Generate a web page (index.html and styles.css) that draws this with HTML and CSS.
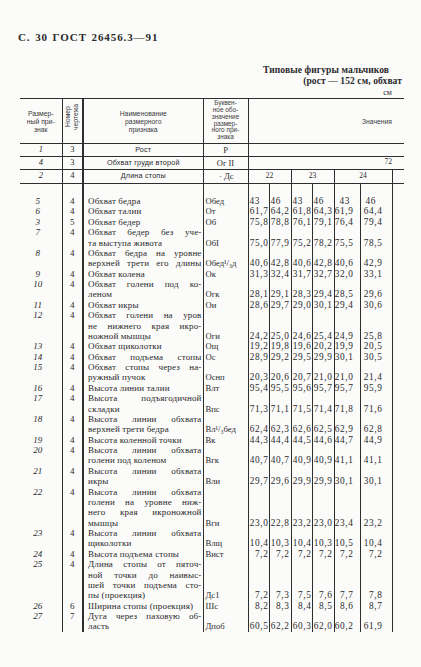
FILE: index.html
```html
<!DOCTYPE html>
<html lang="ru">
<head>
<meta charset="utf-8">
<title>ГОСТ 26456.3—91, с. 30</title>
<link rel="stylesheet" href="styles.css">
</head>
<body>
<div class="page">
  <div class="running">С. 30 ГОСТ 26456.3—91</div>
  <div class="caption">
    <div class="cap1">Типовые фигуры мальчиков</div>
    <div class="cap2">(рост — 152 см, обхват</div>
    <div class="cap3">см</div>
  </div>
  <table class="t">
    <colgroup>
      <col class="w42"><col class="w21"><col class="w120"><col class="w45">
      <col class="w21"><col class="w22"><col class="w21"><col class="w22"><col class="w26"><col class="w32"><col class="w12">
    </colgroup>
    <thead>
      <tr class="h0">
        <th class="hn">Размер-<br>ный при-<br>знак</th>
        <th class="hc"><span class="rot">Номер<br>чертежа</span></th>
        <th class="hm">Наименование<br>размерного<br>признака</th>
        <th class="hd">Буквен-<br>ное обо-<br>значение<br>размер-<br>ного при-<br>знака</th>
        <th class="hv" colspan="7">Значения</th>
      </tr>
      <tr class="h1">
        <td class="n">1</td><td class="c">3</td><td class="hm2">Рост</td><td class="hd2">Р</td><td class="hv2" colspan="7"></td>
      </tr>
      <tr class="h1">
        <td class="n">4</td><td class="c">3</td><td class="hm2">Обхват груди второй</td><td class="hd2">Ог II</td><td class="hv2 r72" colspan="7">72</td>
      </tr>
      <tr class="h2">
        <td class="n">2</td><td class="c">4</td><td class="hm2">Длина стопы</td><td class="hd2 dc">· Дс</td>
        <td class="g" colspan="2">22</td><td class="g" colspan="2">23</td><td class="g" colspan="2">24</td><td class="x"></td>
      </tr>
    </thead>
    <tbody class="b">
      <tr class="sp"><td></td><td class="c"></td><td class="nm"></td><td class="cd"></td><td class="v"></td><td class="v"></td><td class="v"></td><td class="v"></td><td class="v"></td><td class="v"></td><td class="x"></td></tr>
      <tr class="f"><td class="n">5</td><td class="c">4</td><td class="nm"><div class="ln">Обхват бедра</div></td><td class="cd">Обед</td><td class="v v1">43</td><td class="v v2">46</td><td class="v v3">43</td><td class="v v4">46</td><td class="v v5">43</td><td class="v v6">46</td><td class="x"></td></tr>
      <tr><td class="n">6</td><td class="c">4</td><td class="nm"><div class="ln">Обхват талии</div></td><td class="cd">От</td><td class="v v1">61,7</td><td class="v v2">64,2</td><td class="v v3">61,8</td><td class="v v4">64,3</td><td class="v v5">61,9</td><td class="v v6">64,4</td><td class="x"></td></tr>
      <tr><td class="n">3</td><td class="c">5</td><td class="nm"><div class="ln">Обхват бедер</div></td><td class="cd">Об</td><td class="v v1">75,8</td><td class="v v2">78,8</td><td class="v v3">76,1</td><td class="v v4">79,1</td><td class="v v5">76,4</td><td class="v v6">79,4</td><td class="x"></td></tr>
      <tr><td class="n">7</td><td class="c">4</td><td class="nm"><div class="ln j">Обхват бедер без уче-</div><div class="ln">та выступа живота</div></td><td class="cd">ОбI</td><td class="v v1">75,0</td><td class="v v2">77,9</td><td class="v v3">75,2</td><td class="v v4">78,2</td><td class="v v5">75,5</td><td class="v v6">78,5</td><td class="x"></td></tr>
      <tr><td class="n">8</td><td class="c">4</td><td class="nm"><div class="ln j">Обхват бедра на уровне</div><div class="ln j">верхней трети его длины</div></td><td class="cd">Обед¹/₃д</td><td class="v v1">40,6</td><td class="v v2">42,8</td><td class="v v3">40,6</td><td class="v v4">42,8</td><td class="v v5">40,6</td><td class="v v6">42,9</td><td class="x"></td></tr>
      <tr><td class="n">9</td><td class="c">4</td><td class="nm"><div class="ln">Обхват колена</div></td><td class="cd">Ок</td><td class="v v1">31,3</td><td class="v v2">32,4</td><td class="v v3">31,7</td><td class="v v4">32,7</td><td class="v v5">32,0</td><td class="v v6">33,1</td><td class="x"></td></tr>
      <tr><td class="n">10</td><td class="c">4</td><td class="nm"><div class="ln j">Обхват голени под ко-</div><div class="ln">леном</div></td><td class="cd">Огк</td><td class="v v1">28,1</td><td class="v v2">29,1</td><td class="v v3">28,3</td><td class="v v4">29,4</td><td class="v v5">28,5</td><td class="v v6">29,6</td><td class="x"></td></tr>
      <tr><td class="n">11</td><td class="c">4</td><td class="nm"><div class="ln">Обхват икры</div></td><td class="cd">Ои</td><td class="v v1">28,6</td><td class="v v2">29,7</td><td class="v v3">29,0</td><td class="v v4">30,1</td><td class="v v5">29,4</td><td class="v v6">30,6</td><td class="x"></td></tr>
      <tr><td class="n">12</td><td class="c">4</td><td class="nm"><div class="ln j">Обхват голени на уров</div><div class="ln j">не нижнего края икро-</div><div class="ln">ножной мышцы</div></td><td class="cd">Оги</td><td class="v v1">24,2</td><td class="v v2">25,0</td><td class="v v3">24,6</td><td class="v v4">25,4</td><td class="v v5">24,9</td><td class="v v6">25,8</td><td class="x"></td></tr>
      <tr><td class="n">13</td><td class="c">4</td><td class="nm"><div class="ln">Обхват щиколотки</div></td><td class="cd">Ощ</td><td class="v v1">19,2</td><td class="v v2">19,8</td><td class="v v3">19,6</td><td class="v v4">20,2</td><td class="v v5">19,9</td><td class="v v6">20,5</td><td class="x"></td></tr>
      <tr><td class="n">14</td><td class="c">4</td><td class="nm"><div class="ln j">Обхват подъема стопы</div></td><td class="cd">Ос</td><td class="v v1">28,9</td><td class="v v2">29,2</td><td class="v v3">29,5</td><td class="v v4">29,9</td><td class="v v5">30,1</td><td class="v v6">30,5</td><td class="x"></td></tr>
      <tr><td class="n">15</td><td class="c">4</td><td class="nm"><div class="ln j">Обхват стопы через на-</div><div class="ln">ружный пучок</div></td><td class="cd">Оснп</td><td class="v v1">20,3</td><td class="v v2">20,6</td><td class="v v3">20,7</td><td class="v v4">21,0</td><td class="v v5">21,0</td><td class="v v6">21,4</td><td class="x"></td></tr>
      <tr><td class="n">16</td><td class="c">4</td><td class="nm"><div class="ln">Высота линии талии</div></td><td class="cd">Влт</td><td class="v v1">95,4</td><td class="v v2">95,5</td><td class="v v3">95,6</td><td class="v v4">95,7</td><td class="v v5">95,7</td><td class="v v6">95,9</td><td class="x"></td></tr>
      <tr><td class="n">17</td><td class="c">4</td><td class="nm"><div class="ln j">Высота подъягодичной</div><div class="ln">складки</div></td><td class="cd">Впс</td><td class="v v1">71,3</td><td class="v v2">71,1</td><td class="v v3">71,5</td><td class="v v4">71,4</td><td class="v v5">71,8</td><td class="v v6">71,6</td><td class="x"></td></tr>
      <tr><td class="n">18</td><td class="c">4</td><td class="nm"><div class="ln j">Высота линии обхвата</div><div class="ln">верхней трети бедра</div></td><td class="cd">Вл¹/₃бед</td><td class="v v1">62,4</td><td class="v v2">62,3</td><td class="v v3">62,6</td><td class="v v4">62,5</td><td class="v v5">62,9</td><td class="v v6">62,8</td><td class="x"></td></tr>
      <tr><td class="n">19</td><td class="c">4</td><td class="nm"><div class="ln">Высота коленной точки</div></td><td class="cd">Вк</td><td class="v v1">44,3</td><td class="v v2">44,4</td><td class="v v3">44,5</td><td class="v v4">44,6</td><td class="v v5">44,7</td><td class="v v6">44,9</td><td class="x"></td></tr>
      <tr><td class="n">20</td><td class="c">4</td><td class="nm"><div class="ln j">Высота линии обхвата</div><div class="ln">голени под коленом</div></td><td class="cd">Вгк</td><td class="v v1">40,7</td><td class="v v2">40,7</td><td class="v v3">40,9</td><td class="v v4">40,9</td><td class="v v5">41,1</td><td class="v v6">41,1</td><td class="x"></td></tr>
      <tr><td class="n">21</td><td class="c">4</td><td class="nm"><div class="ln j">Высота линии обхвата</div><div class="ln">икры</div></td><td class="cd">Вли</td><td class="v v1">29,7</td><td class="v v2">29,6</td><td class="v v3">29,9</td><td class="v v4">29,9</td><td class="v v5">30,1</td><td class="v v6">30,1</td><td class="x"></td></tr>
      <tr><td class="n">22</td><td class="c">4</td><td class="nm"><div class="ln j">Высота линии обхвата</div><div class="ln j">голени на уровне ниж-</div><div class="ln j">него края икроножной</div><div class="ln">мышцы</div></td><td class="cd">Вги</td><td class="v v1">23,0</td><td class="v v2">22,8</td><td class="v v3">23,2</td><td class="v v4">23,0</td><td class="v v5">23,4</td><td class="v v6">23,2</td><td class="x"></td></tr>
      <tr><td class="n">23</td><td class="c">4</td><td class="nm"><div class="ln j">Высота линии обхвата</div><div class="ln">щиколотки</div></td><td class="cd">Влщ</td><td class="v v1">10,4</td><td class="v v2">10,3</td><td class="v v3">10,4</td><td class="v v4">10,3</td><td class="v v5">10,5</td><td class="v v6">10,4</td><td class="x"></td></tr>
      <tr><td class="n">24</td><td class="c">4</td><td class="nm"><div class="ln">Высота подъема стопы</div></td><td class="cd">Вист</td><td class="v v1">7,2</td><td class="v v2">7,2</td><td class="v v3">7,2</td><td class="v v4">7,2</td><td class="v v5">7,2</td><td class="v v6">7,2</td><td class="x"></td></tr>
      <tr><td class="n">25</td><td class="c">4</td><td class="nm"><div class="ln j">Длина стопы от пяточ-</div><div class="ln j">ной точки до наивыс-</div><div class="ln j">шей точки подъема сто-</div><div class="ln">пы (проекция)</div></td><td class="cd">Дс1</td><td class="v v1">7,2</td><td class="v v2">7,3</td><td class="v v3">7,5</td><td class="v v4">7,6</td><td class="v v5">7,7</td><td class="v v6">7,8</td><td class="x"></td></tr>
      <tr><td class="n">26</td><td class="c">6</td><td class="nm"><div class="ln">Ширина стопы (проекция)</div></td><td class="cd">Шс</td><td class="v v1">8,2</td><td class="v v2">8,3</td><td class="v v3">8,4</td><td class="v v4">8,5</td><td class="v v5">8,6</td><td class="v v6">8,7</td><td class="x"></td></tr>
      <tr><td class="n">27</td><td class="c">7</td><td class="nm"><div class="ln j">Дуга через паховую об-</div><div class="ln">ласть</div></td><td class="cd">Дпоб</td><td class="v v1">60,5</td><td class="v v2">62,2</td><td class="v v3">60,3</td><td class="v v4">62,0</td><td class="v v5">60,2</td><td class="v v6">61,9</td><td class="x"></td></tr>
    </tbody>
  </table>
</div>
</body>
</html>
```
FILE: styles.css
```css
* { box-sizing: border-box; }

body {
  margin: 0;
  background: #fbfbfa;
  color: #2a2a2a;
  font-family: "Liberation Serif", "Times New Roman", serif;
}

.page {
  width: 421px;
  height: 667px;
  overflow: hidden;
  padding-top: 31px;
}

.running {
  margin-left: 18px;
  font-weight: bold;
  font-size: 11px;
  line-height: 12px;
  letter-spacing: 0.9px;
  word-spacing: 1px;
}

.caption { margin-top: 21.5px; }
.caption div {
  text-align: right;
  line-height: 11px;
  font-weight: bold;
  font-size: 9.5px;
  letter-spacing: 0.1px;
}
.cap1 { padding-right: 32px; }
.cap2 { padding-right: 19px; }
.cap3 { padding-right: 29px; font-weight: normal !important; font-size: 8px !important; }

/* table */
.t {
  margin-left: 20px;
  width: 384px;
  border-collapse: collapse;
  table-layout: fixed;
}
.w42 { width: 42px; } .w21 { width: 21px; } .w120 { width: 120px; } .w45 { width: 45px; }
.w22 { width: 22px; } .w26 { width: 26px; } .w32 { width: 32px; } .w12 { width: 12px; }

.t th, .t td { padding: 0; }

/* header */
.h0 th {
  height: 45px;
  border-top: 1px solid #2e2e2e;
  border-bottom: 1px solid #2e2e2e;
  font-family: "Liberation Sans", Arial, sans-serif;
  font-weight: normal;
  font-size: 6.8px;
  line-height: 8px;
  color: #3a3a3a;
  vertical-align: middle;
}
.hn { text-align: center; padding-top: 3px !important; }
.hc { border-left: 1px solid #2e2e2e; }
.rot {
  display: inline-block;
  writing-mode: vertical-rl;
  transform: rotate(180deg);
  text-align: center;
  line-height: 8px;
  margin-bottom: 4px;
}
.hm { border-left: 2px solid #2e2e2e; text-align: center; padding-top: 2px !important; }
.hd { border-left: 1px solid #2e2e2e; text-align: center; font-size: 6.4px !important; line-height: 6.8px !important; }
.hv { border-left: 1px solid #2e2e2e; text-align: right; padding-right: 12px !important; padding-top: 2px !important; }

.h1 td, .h2 td {
  height: 13px;
  border-bottom: 1px solid #2e2e2e;
  font-size: 8.5px;
  line-height: 10px;
  vertical-align: middle;
}
.h2 td { height: 14px; }
.h1 .n, .h2 .n { padding-right: 0 !important; text-align: center; }
.hm2 { border-left: 2px solid #2e2e2e; text-align: center; font-family: "Liberation Sans", Arial, sans-serif; font-size: 7.2px !important; letter-spacing: 0.2px; }
.hd2 { border-left: 1px solid #2e2e2e; text-align: center; }
.dc { text-align: right; padding-right: 14px !important; }
.hv2 { border-left: 1px solid #2e2e2e; }
.r72 { text-align: right; padding-right: 12px !important; vertical-align: top !important; font-size: 7.5px !important; }
.g { border-left: 1px solid #2e2e2e; text-align: center; font-size: 7.5px !important; }

/* body */
.b td {
  font-size: 9px;
  line-height: 10.37px;
  vertical-align: bottom;
  white-space: nowrap;
}
.b .sp td { height: 13px; }
.n {
  font-style: italic;
  text-align: center;
  padding-right: 6px !important;
  vertical-align: top !important;
}
.c {
  border-left: 1px solid #2e2e2e;
  text-align: center;
  vertical-align: top !important;
}
.nm {
  border-left: 2px solid #2e2e2e;
  padding-left: 4px !important;
  padding-right: 1px !important;
  white-space: normal !important;
  letter-spacing: 0.15px;
}
.ln { line-height: 10.37px; }
.j { text-align: justify; text-align-last: justify; }
.cd {
  border-left: 1px solid #2e2e2e;
  padding-left: 2px !important;
  font-size: 8.6px !important;
  overflow: hidden;
}
.v {
  border-left: 1px solid #2e2e2e;
  text-align: right;
  font-size: 9.3px !important;
  letter-spacing: 0.6px;
}
.v1, .v3 { padding-right: 0 !important; }
.v2, .v4 { padding-right: 1px !important; }
.v5 { padding-right: 6px !important; }
.v6 { padding-right: 9px !important; }
.f .v { text-align: left; }
.f .v1, .f .v2, .f .v3, .f .v4 { padding-left: 1px; }
.f .v5, .f .v6 { padding-left: 5px; }
.x { border-left: 1px solid #2e2e2e; }
```
